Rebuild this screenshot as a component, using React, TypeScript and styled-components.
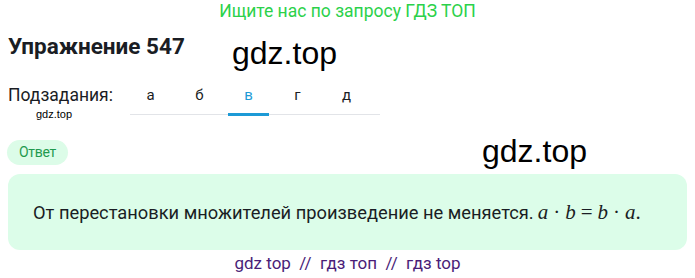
import React from "react";
import styled, { createGlobalStyle } from "styled-components";

const Global = createGlobalStyle`
  html, body { margin: 0; padding: 0; background: #fff; }
  body { font-family: Roboto, "Noto Sans", Arial, sans-serif; color: #111; }
`;

const Page = styled.div`
  position: relative;
  width: 695px;
  height: 278px;
  overflow: hidden;
`;

const Banner = styled.div`
  height: 24px;
  text-align: center;
  color: #2bd14a;
  font-size: 17.5px;
  line-height: 22px;
`;

const Title = styled.h1`
  margin: 9px 0 0 8px;
  font-size: 22.5px;
  font-weight: 700;
  line-height: 26px;
  color: #1a1d24;
`;

const Watermark = styled.div<{ $x: number; $y: number; $size: number }>`
  position: absolute;
  left: ${(p) => p.$x}px;
  top: ${(p) => p.$y}px;
  font-family: "Liberation Sans", Arial, sans-serif;
  font-size: ${(p) => p.$size}px;
  line-height: 1;
  color: #000;
  pointer-events: none;
`;

const SubRow = styled.div`
  display: flex;
  align-items: flex-end;
  margin: 22px 0 0 8px;
`;

const SubLabel = styled.div`
  font-size: 17.5px;
  line-height: 28px;
  width: 122px;
  color: #1a1d24;
  padding-bottom: 6px;
`;

const Tabs = styled.div`
  display: flex;
  gap: 8px;
  width: 250px;
  border-bottom: 1px solid #e2e4e8;
`;

const Tab = styled.div<{ $active?: boolean }>`
  width: 41px;
  text-align: center;
  font-size: 15px;
  line-height: 28px;
  padding-bottom: 4px;
  color: ${(p) => (p.$active ? "#1d9ad6" : "#1a1d24")};
  border-bottom: 3px solid ${(p) => (p.$active ? "#1d9ad6" : "transparent")};
  margin-bottom: -2px;
`;

const Pill = styled.div`
  display: inline-block;
  margin: 25px 0 0 7px;
  padding: 0 12px;
  height: 25px;
  line-height: 25px;
  border-radius: 12.5px;
  background: #dcfce8;
  color: #1f9a4e;
  font-size: 14px;
  letter-spacing: -0.3px;
`;

const AnswerBox = styled.div`
  margin: 9px 8px 0 8px;
  height: 76px;
  border-radius: 12px;
  background: #dcfde9;
  display: flex;
  align-items: center;
  padding-left: 25px;
  font-size: 18.3px;
  color: #1a1d24;
`;

const Math = styled.span`
  font-family: "Liberation Serif", "DejaVu Serif", serif;
  font-size: 21px;
  margin-left: 4px;
`;

const MathVar = styled.i``;

const Op = styled.span`
  margin: 0 5px;
`;

const Footer = styled.div`
  text-align: center;
  color: #4a1d78;
  font-size: 17px;
  line-height: 24px;
  margin-top: 1px;
`;

export default function App() {
  return (
    <>
      <Global />
      <Page>
        <Banner>Ищите нас по запросу ГДЗ ТОП</Banner>
        <Title>Упражнение 547</Title>
        <SubRow>
          <SubLabel>Подзадания:</SubLabel>
          <Tabs>
            <Tab>а</Tab>
            <Tab>б</Tab>
            <Tab $active>в</Tab>
            <Tab>г</Tab>
            <Tab>д</Tab>
          </Tabs>
        </SubRow>
        <Pill>Ответ</Pill>
        <AnswerBox>
          От перестановки множителей произведение не меняется.
          <Math>
            <MathVar>a</MathVar>
            <Op>·</Op>
            <MathVar>b</MathVar>
            <Op>=</Op>
            <MathVar>b</MathVar>
            <Op>·</Op>
            <MathVar>a</MathVar>.
          </Math>
        </AnswerBox>
        <Footer>gdz top &nbsp;//&nbsp; гдз топ &nbsp;//&nbsp; гдз top</Footer>
        <Watermark $x={232} $y={37} $size={32}>gdz.top</Watermark>
        <Watermark $x={36} $y={109} $size={11}>gdz.top</Watermark>
        <Watermark $x={482} $y={135} $size={32}>gdz.top</Watermark>
      </Page>
    </>
  );
}
